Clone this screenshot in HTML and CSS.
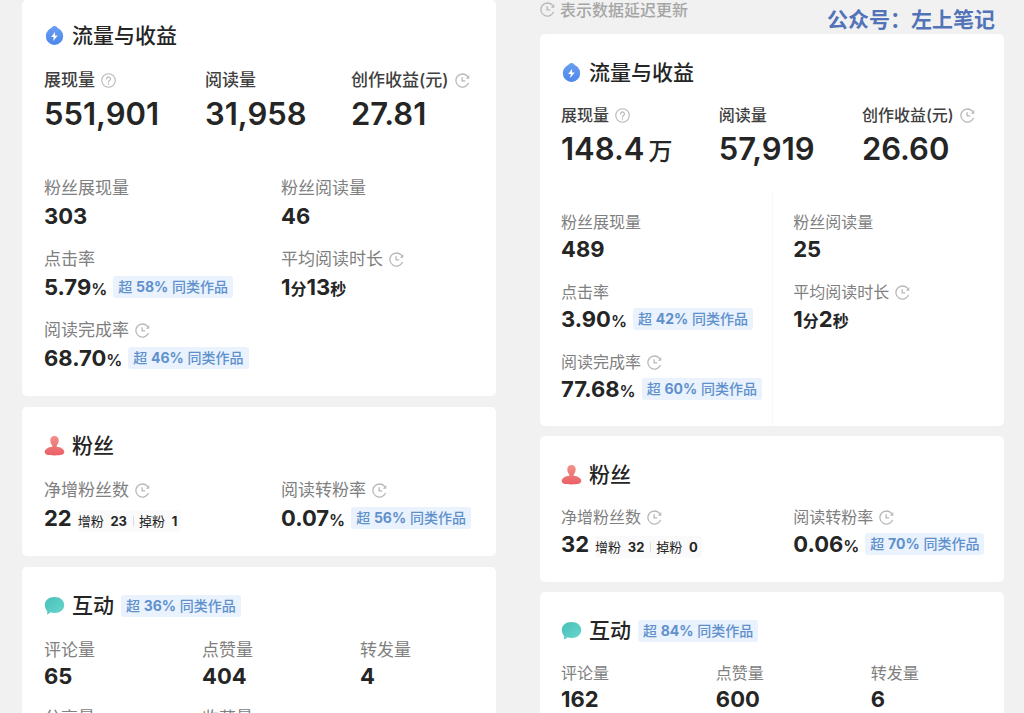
FILE: index.html
```html
<!DOCTYPE html>
<html lang="zh-CN">
<head>
<meta charset="utf-8">
<meta name="viewport" content="width=device-width, initial-scale=1">
<title>流量与收益</title>
<link rel="stylesheet" href="styles.css">
</head>
<body>
<svg class="sprite" aria-hidden="true">
  <defs>
    <linearGradient id="g-blue" x1="0" y1="0" x2="0" y2="1"><stop offset="0" stop-color="#6a9ff0"/><stop offset="1" stop-color="#4c86ea"/></linearGradient>
    <linearGradient id="g-red" x1="0" y1="0" x2="0" y2="1"><stop offset="0" stop-color="#f29189"/><stop offset="1" stop-color="#ea5f66"/></linearGradient>
    <linearGradient id="g-teal" x1="0" y1="0" x2="1" y2="1"><stop offset="0" stop-color="#48c0b8"/><stop offset="1" stop-color="#68d6cd"/></linearGradient>
  </defs>
  <symbol id="i-clock" viewBox="0 0 16 16">
    <path d="M13.2 3.4A7 7 0 1 0 14.300 11" fill="none" stroke="currentColor" stroke-width="1.4" stroke-linecap="round"/>
    <path d="M15.200 2v4h-3.600z" fill="currentColor"/>
    <path d="M7.6 5v3.400h2.800" fill="none" stroke="currentColor" stroke-width="1.4" stroke-linecap="round"/>
  </symbol>
  <symbol id="i-help" viewBox="0 0 16 16">
    <circle cx="8" cy="8" r="7.2" fill="none" stroke="currentColor" stroke-width="1.2"/>
    <path d="M5.9 6.3a2.1 2.1 0 1 1 3.2 1.8c-.8.5-1.1.8-1.1 1.6" fill="none" stroke="currentColor" stroke-width="1.3" stroke-linecap="round"/>
    <circle cx="8" cy="11.8" r=".8" fill="currentColor"/>
  </symbol>
  <symbol id="i-traffic" viewBox="0 0 20 20">
    <path d="M10 0c1 0 1.900.6 2.700 1.400 1 .9 2.200 1.400 3.400 2.600A8.700 8.700 0 1 1 3.900 4c1.200-1.200 2.400-1.700 3.400-2.600C8.100.6 9 0 10 0z" fill="url(#g-blue)"/>
    <path d="M10.600 5.800 6.700 11h2.500l-.5 4 4.500-5.400h-2.800z" fill="#fff"/>
  </symbol>
  <symbol id="i-fans" viewBox="0 0 20 20">
    <path d="M10 0c2.700 0 4.200 1.800 4.200 4.300 0 2.300-.9 4.200-2 5.200v1.300c4 .4 7.600 2.400 7.600 5.300 0 2.500-3 3.400-9.800 3.400S.2 18.600.2 16.100c0-2.900 3.600-4.900 7.600-5.300V9.500c-1.100-1-2-2.900-2-5.200C5.800 1.800 7.300 0 10 0z" fill="url(#g-red)"/>
  </symbol>
  <symbol id="i-chat" viewBox="0 0 20 20">
    <path d="M10 1c5.700 0 9.700 3.400 9.700 8s-4 8-9.700 8c-1.500 0-2.900-.2-4.200-.700-.8.900-1.800 1.800-2.900 2-.5.1-.6-.4-.4-.8.400-.8.400-1.700.2-2.600C1.200 13.500.3 11.400.3 9c0-4.600 4-8 9.700-8z" fill="url(#g-teal)"/>
  </symbol>
</svg>

<main class="page">
  <section class="panel">
    <article class="card card-top">
      <h2 class="title"><svg class="title-icon"><use href="#i-traffic"/></svg>流量与收益</h2>
      <dl class="summary">
        <div><dt class="label label-strong">展现量<svg class="hint"><use href="#i-help"/></svg></dt><dd class="figure">551,901</dd></div>
        <div><dt class="label label-strong">阅读量</dt><dd class="figure">31,958</dd></div>
        <div><dt class="label label-strong">创作收益(元)<svg class="hint"><use href="#i-clock"/></svg></dt><dd class="figure">27.81</dd></div>
      </dl>
      <dl class="metrics details">
        <div><dt class="label">粉丝展现量</dt><dd class="value">303</dd></div>
        <div><dt class="label">粉丝阅读量</dt><dd class="value">46</dd></div>
        <div><dt class="label">点击率</dt><dd class="value"><span>5.79<small>%</small></span><span class="badge">超 <b>58%</b> 同类作品</span></dd></div>
        <div><dt class="label">平均阅读时长<svg class="hint"><use href="#i-clock"/></svg></dt><dd class="value"><span>1<small>分</small>13<small>秒</small></span></dd></div>
        <div><dt class="label">阅读完成率<svg class="hint"><use href="#i-clock"/></svg></dt><dd class="value"><span>68.70<small>%</small></span><span class="badge">超 <b>46%</b> 同类作品</span></dd></div>
      </dl>
    </article>
    <article class="card">
      <h2 class="title"><svg class="title-icon"><use href="#i-fans"/></svg>粉丝</h2>
      <dl class="metrics">
        <div><dt class="label">净增粉丝数<svg class="hint"><use href="#i-clock"/></svg></dt><dd class="value"><span>22</span><span class="delta"><span>增粉 <b>23</b></span><span>掉粉 <b>1</b></span></span></dd></div>
        <div><dt class="label">阅读转粉率<svg class="hint"><use href="#i-clock"/></svg></dt><dd class="value"><span>0.07<small>%</small></span><span class="badge">超 <b>56%</b> 同类作品</span></dd></div>
      </dl>
    </article>
    <article class="card">
      <h2 class="title"><svg class="title-icon"><use href="#i-chat"/></svg>互动<span class="badge">超 <b>36%</b> 同类作品</span></h2>
      <dl class="metrics thirds">
        <div><dt class="label">评论量</dt><dd class="value">65</dd></div>
        <div><dt class="label">点赞量</dt><dd class="value">404</dd></div>
        <div><dt class="label">转发量</dt><dd class="value">4</dd></div>
        <div><dt class="label">分享量</dt></div>
        <div><dt class="label">收藏量</dt></div>
      </dl>
    </article>
  </section>

  <section class="panel panel-compact">
    <header class="topbar">
      <p class="note"><svg class="hint"><use href="#i-clock"/></svg>表示数据延迟更新</p>
      <p class="account">公众号：左上笔记</p>
    </header>
    <article class="card card-split">
      <h2 class="title"><svg class="title-icon"><use href="#i-traffic"/></svg>流量与收益</h2>
      <dl class="summary">
        <div><dt class="label label-strong">展现量<svg class="hint"><use href="#i-help"/></svg></dt><dd class="figure">148.4<small>万</small></dd></div>
        <div><dt class="label label-strong">阅读量</dt><dd class="figure">57,919</dd></div>
        <div><dt class="label label-strong">创作收益(元)<svg class="hint"><use href="#i-clock"/></svg></dt><dd class="figure">26.60</dd></div>
      </dl>
      <dl class="metrics details">
        <div><dt class="label">粉丝展现量</dt><dd class="value">489</dd></div>
        <div><dt class="label">粉丝阅读量</dt><dd class="value">25</dd></div>
        <div><dt class="label">点击率</dt><dd class="value"><span>3.90<small>%</small></span><span class="badge">超 <b>42%</b> 同类作品</span></dd></div>
        <div><dt class="label">平均阅读时长<svg class="hint"><use href="#i-clock"/></svg></dt><dd class="value"><span>1<small>分</small>2<small>秒</small></span></dd></div>
        <div><dt class="label">阅读完成率<svg class="hint"><use href="#i-clock"/></svg></dt><dd class="value"><span>77.68<small>%</small></span><span class="badge">超 <b>60%</b> 同类作品</span></dd></div>
      </dl>
    </article>
    <article class="card">
      <h2 class="title"><svg class="title-icon"><use href="#i-fans"/></svg>粉丝</h2>
      <dl class="metrics">
        <div><dt class="label">净增粉丝数<svg class="hint"><use href="#i-clock"/></svg></dt><dd class="value"><span>32</span><span class="delta"><span>增粉 <b>32</b></span><span>掉粉 <b>0</b></span></span></dd></div>
        <div><dt class="label">阅读转粉率<svg class="hint"><use href="#i-clock"/></svg></dt><dd class="value"><span>0.06<small>%</small></span><span class="badge">超 <b>70%</b> 同类作品</span></dd></div>
      </dl>
    </article>
    <article class="card">
      <h2 class="title"><svg class="title-icon"><use href="#i-chat"/></svg>互动<span class="badge">超 <b>84%</b> 同类作品</span></h2>
      <dl class="metrics thirds">
        <div><dt class="label">评论量</dt><dd class="value">162</dd></div>
        <div><dt class="label">点赞量</dt><dd class="value">600</dd></div>
        <div><dt class="label">转发量</dt><dd class="value">6</dd></div>
      </dl>
    </article>
  </section>
</main>
</body>
</html>
```

FILE: styles.css
```css
* {
  box-sizing: border-box;
}

body {
  margin: 0;
  background: #f1f1f1;
  color: #252525;
  font-family: Inter, "Noto Sans CJK SC", sans-serif;
}

h2, dl, dd, p {
  margin: 0;
}

.sprite {
  position: absolute;
  width: 0;
  height: 0;
}

.page {
  display: grid;
  grid-template-columns: 474fr 464fr;
  column-gap: 44px;
  align-items: start;
  height: 100vh;
  overflow: hidden;
  padding: 0 20px 0 22px;
}

.panel {
  --title-gap: 18px;
  --value-gap: 2px;
  --details-gap: 44px;
  --label-size: 17px;
  --card-inset: 22px;
  display: flex;
  flex-direction: column;
  gap: 11px;
  min-width: 0;
}

.panel-compact {
  --title-gap: 16px;
  --value-gap: 1px;
  --details-gap: 43px;
  --label-size: 16px;
  --card-inset: 21px;
  gap: 10px;
}

.topbar {
  display: flex;
  justify-content: space-between;
  height: 24px;
}

.note {
  display: flex;
  align-items: center;
  gap: 5px;
  height: 18px;
  font-size: 16px;
  font-weight: 500;
  color: #a6a6a6;
}

.account {
  padding: 8px 9px 0 0;
  font-size: 21px;
  line-height: 24px;
  font-weight: 700;
  color: #5273b8;
}

.card {
  padding: 25px 0 24px var(--card-inset);
  border-radius: 5px;
  background: #fff;
}

.card-top {
  padding-top: 22px;
}

.title {
  display: flex;
  align-items: center;
  gap: 7px;
  margin-bottom: var(--title-gap);
  font-size: 21px;
  line-height: 28px;
  font-weight: 500;
}

.title-icon {
  width: 21px;
  height: 20px;
}

.summary {
  display: grid;
  grid-template-columns: 161fr 146fr 145fr;
}

.metrics {
  display: grid;
  grid-template-columns: 237fr 215fr;
  row-gap: 17px;
}

.thirds {
  --value-gap: 0px;
  grid-template-columns: 158fr 158fr 136fr;
  row-gap: 16px;
}

.details {
  margin-top: var(--details-gap);
}

.card-split {
  padding-bottom: 23px;
  background: linear-gradient(#f8f8f8, #f8f8f8) 50% 100% / 1px 60% no-repeat #fff;
}

.label {
  display: flex;
  align-items: center;
  gap: 6px;
  font-size: var(--label-size);
  line-height: 24px;
  color: #808080;
  white-space: nowrap;
}

.label-strong {
  font-weight: 500;
  color: #404040;
}

.hint {
  width: 15px;
  height: 15px;
  flex: none;
  color: #b8b8b8;
}

.figure {
  margin-top: 4px;
  font-size: 31px;
  line-height: 36px;
  font-weight: 600;
  white-space: nowrap;
}

.figure small {
  margin-left: 4px;
  font-size: 24px;
  line-height: 1;
  font-weight: 500;
}

.value {
  display: flex;
  align-items: center;
  gap: 6px;
  margin-top: var(--value-gap);
  font-size: 22px;
  line-height: 28px;
  font-weight: 700;
  white-space: nowrap;
}

.value small {
  font-size: 16px;
  line-height: 1;
  font-weight: 600;
}

.badge {
  padding: 0 5px;
  border-radius: 3px;
  background: #e9f2fd;
  font-size: 14px;
  line-height: 22px;
  font-weight: 500;
  color: #6090cc;
}

.badge b,
.delta b {
  font-weight: 700;
}

.delta {
  display: flex;
  align-self: flex-end;
  align-items: center;
  padding-right: 4px;
  border-radius: 3px;
  background: #fafafa;
  font-size: 13px;
  line-height: 22px;
  font-weight: 400;
}

.delta b {
  margin-left: 3px;
}

.delta span + span {
  margin-left: 6px;
  padding-left: 6px;
  background: linear-gradient(#dcdcdc, #dcdcdc) 0 50% / 1px 10px no-repeat;
}
```
